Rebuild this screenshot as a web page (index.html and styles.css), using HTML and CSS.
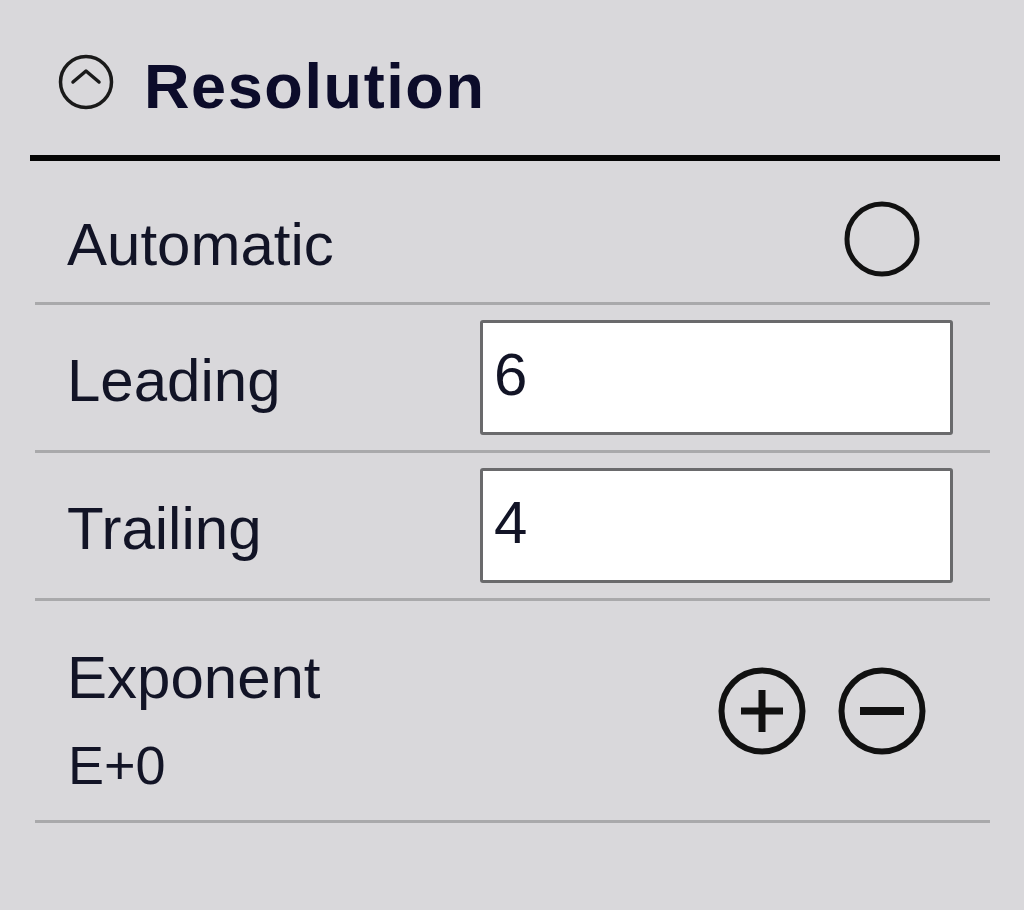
FILE: index.html
```html
<!DOCTYPE html>
<html>
<head>
<meta charset="utf-8">
<link rel="stylesheet" href="styles.css">
</head>
<body>
<div class="panel">
  <div class="header">
    <svg class="collapse" width="58" height="58" viewBox="0 0 58 58">
      <circle cx="29" cy="29" r="25.5" fill="none" stroke="#1a1a1a" stroke-width="3.5"/>
      <path d="M16 29 L29 18 L42 29" fill="none" stroke="#1a1a1a" stroke-width="3.5" stroke-linejoin="round" stroke-linecap="round"/>
    </svg>
    <span class="title">Resolution</span>
  </div>
  <div class="rows">
    <div class="row row-auto">
      <span class="label">Automatic</span>
      <svg class="radio" width="80" height="80" viewBox="0 0 80 80">
        <circle cx="40" cy="40" r="35" fill="none" stroke="#111" stroke-width="5"/>
      </svg>
    </div>
    <div class="row row-field">
      <span class="label">Leading</span>
      <div class="input">6</div>
    </div>
    <div class="row row-field">
      <span class="label">Trailing</span>
      <div class="input">4</div>
    </div>
    <div class="row row-exp">
      <div class="exp-text">
        <span class="label">Exponent</span>
        <span class="sub">E+0</span>
      </div>
      <div class="exp-buttons">
        <svg width="90" height="90" viewBox="0 0 90 90">
          <circle cx="45" cy="45" r="40.5" fill="none" stroke="#111" stroke-width="6"/>
          <path d="M45 24 V66 M24 45 H66" stroke="#111" stroke-width="7"/>
        </svg>
        <svg width="90" height="90" viewBox="0 0 90 90">
          <circle cx="45" cy="45" r="40.5" fill="none" stroke="#111" stroke-width="6"/>
          <path d="M23 45 H67" stroke="#111" stroke-width="8"/>
        </svg>
      </div>
    </div>
  </div>
</div>
</body>
</html>
```
FILE: styles.css
```css
html, body {
  margin: 0;
  padding: 0;
  background: #d9d8db;
}
body {
  width: 1024px;
  height: 910px;
  font-family: "Liberation Sans", Arial, sans-serif;
  color: #121426;
}
.header {
  margin: 0 24px 0 30px;
  height: 161px;
  box-sizing: border-box;
  padding: 14px 0 6px 27px;
  border-bottom: 6px solid #050505;
  display: flex;
  align-items: center;
}
.collapse {
  flex: none;
}
.title {
  margin-left: 29px;
  font-weight: bold;
  font-size: 63px;
  letter-spacing: 1.6px;
  color: #0c0c2a;
  position: relative;
  top: 4px;
}
.rows {
  margin: 0 34px 0 35px;
}
.row {
  display: flex;
  align-items: center;
  justify-content: space-between;
  border-bottom: 3px solid #a9a9ab;
}
.label {
  font-size: 60px;
  padding-left: 32px;
  line-height: 1;
}
.row-auto {
  height: 144px;
  box-sizing: border-box;
  padding-top: 14px;
}
.row-auto .label {
  position: relative;
  top: 6px;
}
.radio {
  margin-right: 68px;
}
.row-field {
  height: 148px;
  box-sizing: border-box;
}
.row-field .label {
  position: relative;
  top: 3px;
}
.input {
  width: 473px;
  height: 115px;
  box-sizing: border-box;
  background: #fff;
  border: 3px solid #6a6a6c;
  border-radius: 3px;
  font-size: 60px;
  line-height: 1;
  padding: 22px 0 0 11px;
  margin-right: 37px;
}
.row-exp {
  height: 222px;
  box-sizing: border-box;
}
.exp-text {
  display: flex;
  flex-direction: column;
  gap: 30px;
  margin-top: 18px;
}
.row-exp .label {
  padding-left: 32px;
}
.sub {
  font-size: 54px;
  padding-left: 33px;
  line-height: 1;
}
.exp-buttons {
  display: flex;
  gap: 30px;
  margin-right: 63px;
  margin-top: 0;
}
```
